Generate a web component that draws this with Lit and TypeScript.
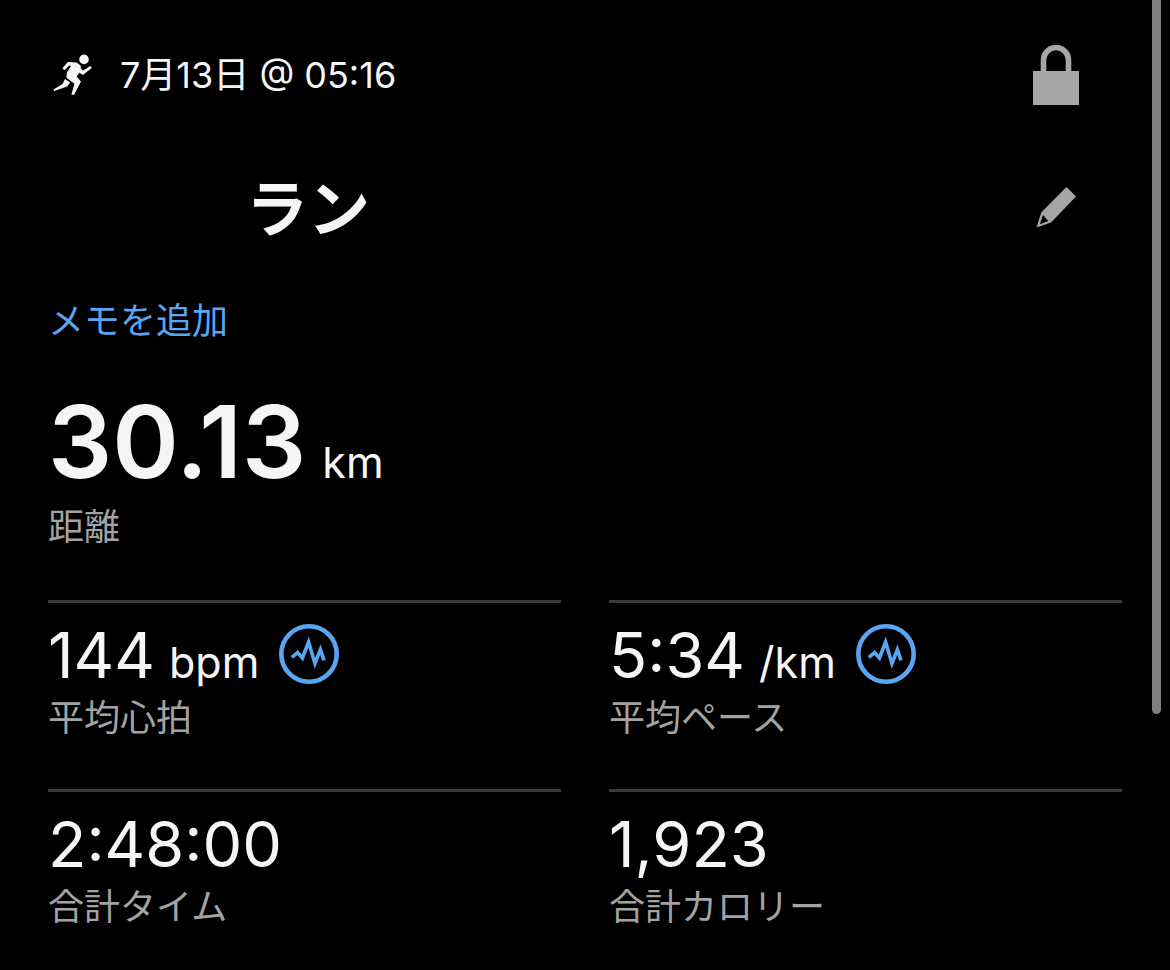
import { LitElement, html, css, svg, nothing } from "lit";
import { customElement, property } from "lit/decorators.js";

interface Stat {
  value: string;
  unit?: string;
  label: string;
  chart?: boolean;
}

const STATS: Stat[] = [
  { value: "144", unit: "bpm", label: "平均心拍", chart: true },
  { value: "5:34", unit: "/km", label: "平均ペース", chart: true },
  { value: "2:48:00", label: "合計タイム" },
  { value: "1,923", label: "合計カロリー" },
];

const runnerIcon = svg`
  <svg class="runner" viewBox="0 0 40 42" aria-hidden="true">
    <circle cx="31" cy="5.4" r="4.8" fill="currentColor" />
    <path fill="currentColor" d="M14.8 8 L23.4 8.4 L27.6 11.4 L28 14.6 L30 16.4 L37.4 12 L38.8 14 L29.8 21 L26.4 18.8 L23.6 22.4 L28 27.6 L21 41 L18.4 40.4 L21.4 29.8 L13.4 23.8 L13.8 18.8 L18 12 L16.2 11.6 L11.6 16.2 L9.4 14.2 Z" />
    <path fill="currentColor" d="M12 25 L17.2 28.6 L14 32.4 L1.4 37 L0.4 35.4 L9.6 30 Z" />
  </svg>`;

const lockIcon = svg`
  <svg class="icon" viewBox="0 0 60 60" aria-hidden="true">
    <rect x="7" y="26" width="46" height="34" fill="currentColor" />
    <path d="M17.5 28 V15 a12.5 12.5 0 0 1 25 0 V28" fill="none" stroke="currentColor" stroke-width="5.6" />
  </svg>`;

const pencilIcon = svg`
  <svg class="icon" viewBox="0 0 60 60" aria-hidden="true">
    <path fill="currentColor" fill-rule="evenodd" d="M40.5 10 L50 19.5 L25 45.5 L10.5 50.5 L15.2 35.6 Z M17 38 L13.8 47.2 L22.4 44 Z" />
  </svg>`;

const pulseIcon = svg`
  <svg class="pulse" viewBox="0 0 60 60" aria-hidden="true">
    <circle cx="30" cy="30" r="27.7" fill="none" stroke="currentColor" stroke-width="4.6" />
    <path d="M12.8 33.4 L18.6 28.6 L23.4 34 L29.6 18 L36 39.5 L41.4 25.6 L45 36.4" fill="none" stroke="currentColor" stroke-width="3.6" stroke-miterlimit="10" />
  </svg>`;

@customElement("stat-cell")
export class StatCell extends LitElement {
  @property({ attribute: false }) stat!: Stat;

  static styles = css`
    :host {
      display: block;
      border-top: 3px solid #3a3a3a;
      padding-top: 21px;
    }
    .reading {
      display: flex;
      align-items: center;
      gap: 20px;
      height: 60px;
    }
    .value {
      display: flex;
      align-items: baseline;
      gap: 14px;
      padding-top: 2px;
      font-size: 63px;
      line-height: 60px;
      color: #f5f5f5;
      white-space: nowrap;
    }
    .unit {
      font-size: 43px;
      line-height: 40px;
    }
    .chart {
      display: block;
      flex: none;
      padding: 0;
      border: 0;
      background: none;
      color: #5aa5f2;
      cursor: pointer;
    }
    .pulse {
      display: block;
      width: 60px;
      height: 60px;
    }
    .label {
      margin-top: 10px;
      font-size: 36px;
      line-height: 48px;
      color: #a3a3a3;
    }
  `;

  render() {
    const { value, unit, label, chart } = this.stat;
    return html`
      <div class="reading">
        <div class="value">
          <span>${value}</span>
          ${unit ? html`<span class="unit">${unit}</span>` : nothing}
        </div>
        ${chart
          ? html`<button class="chart" type="button" aria-label=${label}>${pulseIcon}</button>`
          : nothing}
      </div>
      <div class="label">${label}</div>
    `;
  }
}

@customElement("app-root")
export class AppRoot extends LitElement {
  static styles = css`
    :host {
      display: block;
      position: relative;
      box-sizing: border-box;
      min-height: 100vh;
      padding: 45px 48px 36px;
      background: #000;
      color: #f5f5f5;
      font-family: Inter, "Noto Sans CJK JP", sans-serif;
    }
    .row {
      display: flex;
      align-items: flex-start;
      justify-content: space-between;
      padding-right: 36px;
    }
    .when {
      display: flex;
      align-items: center;
      gap: 27px;
      padding-left: 5px;
      font-size: 36px;
      line-height: 60px;
    }
    .runner {
      width: 40px;
      height: 42px;
    }
    .action {
      display: block;
      padding: 0;
      border: 0;
      background: none;
      color: #a6a6a6;
      cursor: pointer;
    }
    .icon {
      display: block;
      width: 60px;
      height: 60px;
    }
    .title-row {
      margin-top: 72px;
    }
    .title {
      margin: 0;
      padding-left: 198px;
      font-size: 62px;
      font-weight: 700;
      line-height: 66px;
    }
    .note {
      display: block;
      width: fit-content;
      margin-top: 54px;
      font-size: 36px;
      line-height: 48px;
      color: #5aa5f2;
      text-decoration: none;
    }
    .distance {
      display: flex;
      align-items: baseline;
      gap: 16px;
      margin-top: 48px;
      white-space: nowrap;
    }
    .total {
      font-size: 101px;
      font-weight: 600;
      line-height: 96px;
    }
    .unit {
      font-size: 43px;
      line-height: 40px;
    }
    .label {
      margin-top: 14px;
      font-size: 36px;
      line-height: 48px;
      color: #a3a3a3;
    }
    .stats {
      display: grid;
      grid-template-columns: 1fr 1fr;
      gap: 47px 48px;
      margin-top: 49px;
    }
    .thumb {
      position: absolute;
      top: 0;
      right: 9px;
      width: 9px;
      height: 714px;
      border-radius: 0 0 5px 5px;
      background: #808080;
    }
  `;

  render() {
    return html`
      <header class="row">
        <div class="when">${runnerIcon}<time>7月13日 @ 05:16</time></div>
        <button class="action" type="button" aria-label="非公開">${lockIcon}</button>
      </header>
      <div class="row title-row">
        <h1 class="title">ラン</h1>
        <button class="action" type="button" aria-label="編集">${pencilIcon}</button>
      </div>
      <a class="note" href="#">メモを追加</a>
      <div class="distance"><span class="total">30.13</span><span class="unit">km</span></div>
      <div class="label">距離</div>
      <section class="stats">
        ${STATS.map((s) => html`<stat-cell .stat=${s}></stat-cell>`)}
      </section>
      <div class="thumb"></div>
    `;
  }
}
